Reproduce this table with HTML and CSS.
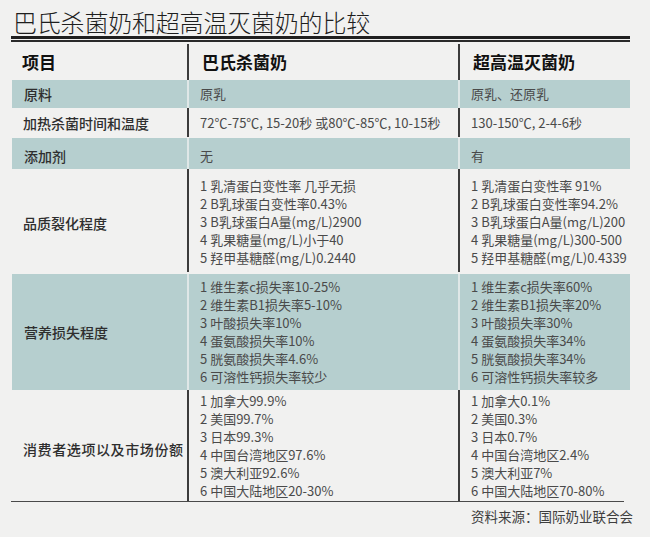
FILE: index.html
```html
<!DOCTYPE html>
<html lang="zh-CN">
<head>
<meta charset="utf-8">
<title>巴氏杀菌奶和超高温灭菌奶的比较</title>
<link rel="stylesheet" href="styles.css">
</head>
<body>
<div class="page">
  <h1 class="title">巴氏杀菌奶和超高温灭菌奶的比较</h1>
  <div class="rule"></div>
  <div class="table">
    <div class="row head">
      <div class="cell c1">项目</div>
      <div class="cell c2">巴氏杀菌奶</div>
      <div class="cell c3">超高温灭菌奶</div>
    </div>
    <div class="row teal r-raw">
      <div class="cell c1">原料</div>
      <div class="cell c2">原乳</div>
      <div class="cell c3">原乳、还原乳</div>
    </div>
    <div class="row white r-heat">
      <div class="cell c1">加热杀菌时间和温度</div>
      <div class="cell c2">72℃-75℃, 15-20秒 或80℃-85℃, 10-15秒</div>
      <div class="cell c3">130-150℃, 2-4-6秒</div>
    </div>
    <div class="row teal r-add">
      <div class="cell c1">添加剂</div>
      <div class="cell c2">无</div>
      <div class="cell c3">有</div>
    </div>
    <div class="row white multi r-quality">
      <div class="cell c1">品质裂化程度</div>
      <div class="cell c2">
        <div>1 乳清蛋白变性率 几乎无损</div>
        <div>2 B乳球蛋白变性率0.43%</div>
        <div>3 B乳球蛋白A量(mg/L)2900</div>
        <div>4 乳果糖量(mg/L)小于40</div>
        <div>5 羟甲基糖醛(mg/L)0.2440</div>
      </div>
      <div class="cell c3">
        <div>1 乳清蛋白变性率 91%</div>
        <div>2 B乳球蛋白变性率94.2%</div>
        <div>3 B乳球蛋白A量(mg/L)200</div>
        <div>4 乳果糖量(mg/L)300-500</div>
        <div>5 羟甲基糖醛(mg/L)0.4339</div>
      </div>
    </div>
    <div class="row teal multi r-nutri">
      <div class="cell c1">营养损失程度</div>
      <div class="cell c2">
        <div>1 维生素c损失率10-25%</div>
        <div>2 维生素B1损失率5-10%</div>
        <div>3 叶酸损失率10%</div>
        <div>4 蛋氨酸损失率10%</div>
        <div>5 胱氨酸损失率4.6%</div>
        <div>6 可溶性钙损失率较少</div>
      </div>
      <div class="cell c3">
        <div>1 维生素c损失率60%</div>
        <div>2 维生素B1损失率20%</div>
        <div>3 叶酸损失率30%</div>
        <div>4 蛋氨酸损失率34%</div>
        <div>5 胱氨酸损失率34%</div>
        <div>6 可溶性钙损失率较多</div>
      </div>
    </div>
    <div class="row white multi r-market">
      <div class="cell c1">消费者选项以及市场份额</div>
      <div class="cell c2">
        <div>1 加拿大99.9%</div>
        <div>2 美国99.7%</div>
        <div>3 日本99.3%</div>
        <div>4 中国台湾地区97.6%</div>
        <div>5 澳大利亚92.6%</div>
        <div>6 中国大陆地区20-30%</div>
      </div>
      <div class="cell c3">
        <div>1 加拿大0.1%</div>
        <div>2 美国0.3%</div>
        <div>3 日本0.7%</div>
        <div>4 中国台湾地区2.4%</div>
        <div>5 澳大利亚7%</div>
        <div>6 中国大陆地区70-80%</div>
      </div>
    </div>
    <div class="row foot">
      <div></div>
      <div></div>
      <div class="source">资料来源：国际奶业联合会</div>
    </div>
  </div>
</div>
</body>
</html>
```

FILE: styles.css
```css
html, body {
  margin: 0;
  padding: 0;
  background: #f1f1f0;
}

.page {
  padding: 10px 20px 0 11px;
  font-family: "Noto Sans CJK SC", "Noto Sans", sans-serif;
  color: #4a4a4a;
}

.title {
  margin: 0 0 0 2px;
  font-size: 24px;
  line-height: 24px;
  font-weight: 300;
  color: #1e1e1e;
  letter-spacing: -0.2px;
}

.rule {
  width: 619px;
  margin-top: 2px;
  height: 1px;
  border-top: 3px solid #1f1f1f;
  border-bottom: 2px solid #2a2a2a;
}

.table {
  width: 619px;
  margin-top: 2px;
}

.row {
  display: grid;
  grid-template-columns: 176px 271px 172px;
}

.cell {
  display: flex;
  align-items: center;
  font-size: 13px;
  line-height: 18px;
}

.c1 {
  padding-left: 12px;
  font-size: 14px;
  font-weight: 500;
  color: #2e2e2e;
}

.r-market .c1 {
  letter-spacing: 0.6px;
}

.c2, .c3 {
  padding-left: 11px;
  border-left: 2px solid #3c3c3c;
}

.head {
  height: 36px;
}

.head .cell {
  font-size: 17px;
  font-weight: 700;
  color: #111;
}

.head .c1 {
  padding-left: 11px;
}

.head .c2, .head .c3 {
  padding-left: 13px;
}

.teal .cell {
  background: #b6cfcf;
}

.teal .c2, .teal .c3 {
  border-left-color: #dfe7e7;
}

.teal .c1 {
  margin-left: 1px;
}

.r-raw { height: 28px; }
.r-heat { height: 29px; }
.r-add { height: 31px; margin-top: 1px; }
.r-add .cell { padding-top: 4px; }

.multi .c2, .multi .c3 {
  flex-direction: column;
  align-items: flex-start;
  justify-content: flex-start;
}

.r-quality .c2, .r-quality .c3 { padding-top: 8px; padding-bottom: 5px; }
.r-quality .c1 { padding-top: 4px; }

.r-nutri { margin-top: 2px; }
.r-nutri .c2, .r-nutri .c3 { padding-top: 4px; padding-bottom: 4px; }

.r-market {
  border-bottom: 1px solid #4a4a4a;
  width: 613px;
}
.r-market .c2, .r-market .c3 { padding-top: 2px; padding-bottom: 1px; }
.r-market .c1 { padding-top: 6px; }

.foot {
  padding-top: 5px;
}

.source {
  padding-left: 13px;
  font-size: 13.5px;
  line-height: 18px;
  color: #3e3e3e;
  white-space: nowrap;
}
```
